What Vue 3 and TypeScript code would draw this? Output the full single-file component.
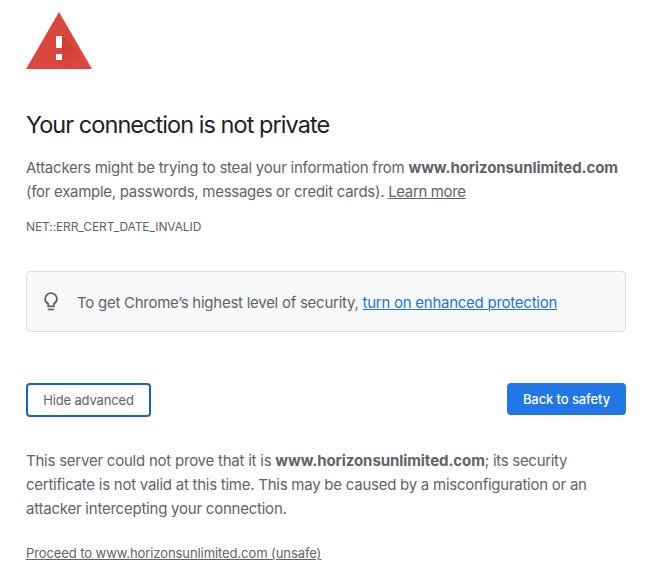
<script setup lang="ts">
const host: string = 'www.horizonsunlimited.com'
</script>

<template>
  <main class="page">
    <svg class="warning" width="66" height="57" viewBox="0 0 66 57" aria-hidden="true">
      <defs>
        <linearGradient id="shade" x1="33" y1="27" x2="52" y2="48" gradientUnits="userSpaceOnUse">
          <stop offset="0" stop-color="#b93c31" />
          <stop offset="1" stop-color="#db473c" />
        </linearGradient>
      </defs>
      <path d="M33 0 66 57H0Z" fill="#db473c" />
      <path d="M36 24 53 41 62 57H39L30 48V42H36V36H30Z" fill="url(#shade)" opacity=".7" />
      <path d="M30 24h6v12h-6zM30 42h6v6h-6z" fill="#fff" />
    </svg>

    <h1 class="title">Your connection is not private</h1>
    <p class="text intro">
      <span class="l1">Attackers might be trying to steal your information from <b>{{ host }}</b></span><br />
      <span class="l2">(for example, passwords, messages or credit cards). <a class="more">Learn more</a></span>
    </p>
    <div class="code">NET::ERR_CERT_DATE_INVALID</div>

    <section class="tip">
      <svg class="bulb" width="14" height="20" viewBox="0 0 14 20" aria-hidden="true">
        <path d="M4.2 14.3V11.9C2.2 10.8 1.1 9.1 1.1 7a5.9 5.9 0 0 1 11.8 0c0 2.1-1.1 3.8-3.1 4.9v2.4Z" fill="none" stroke="#5f6368" stroke-width="1.8" />
        <path d="M4 17h6v1H4z" fill="#5f6368" stroke="#5f6368" stroke-width=".6" />
      </svg>
      <p class="tip-text"><span>To get Chrome’s highest level of security, </span><a class="enhanced">turn on enhanced protection</a></p>
    </section>

    <div class="actions">
      <button class="btn secondary">Hide advanced</button>
      <button class="btn primary">Back to safety</button>
    </div>

    <p class="text details">
      <span class="d1">This server could not prove that it is <b>{{ host }}</b><span class="tail">; its security</span></span><br />
      <span class="d2">certificate is not valid at this time. This may be caused by a misconfiguration or an</span><br />
      <span class="d3">attacker intercepting your connection.</span>
    </p>
    <a class="proceed">Proceed to {{ host }} (unsafe)</a>
  </main>
</template>

<style>
body {
  background: #fff;
}
</style>

<style scoped>
.page {
  box-sizing: border-box;
  width: 626px;
  height: 573px;
  padding: 12px 0 0 26px;
  overflow: hidden;
  display: flex;
  flex-direction: column;
  align-items: stretch;
  font-family: Inter, "Liberation Sans", sans-serif;
  color: #5f6368;
}
.warning {
  display: block;
  flex: none;
}
.title {
  margin: 41px 0 0;
  font-size: 23.5px;
  line-height: 30px;
  font-weight: 400;
  letter-spacing: -0.95px;
  color: #202124;
  white-space: nowrap;
}
.text {
  margin: 0;
  font-size: 15px;
  line-height: 24px;
  letter-spacing: -0.23px;
  white-space: nowrap;
}
.intro {
  margin-top: 16px;
}
.l1 {
  letter-spacing: -0.235px;
}
.l2 {
  letter-spacing: -0.28px;
}
.more {
  letter-spacing: -0.35px;
}
b {
  font-weight: 700;
  letter-spacing: -0.07px;
}
a {
  text-decoration: underline;
  text-decoration-thickness: 1px;
  text-underline-offset: 1px;
  cursor: pointer;
}
.code {
  margin-top: 14px;
  font-size: 12px;
  line-height: 18px;
  letter-spacing: -0.1px;
}
.tip {
  box-sizing: border-box;
  height: 61px;
  margin-top: 35px;
  padding: 1px 17px 0;
  display: flex;
  align-items: center;
  border: 1px solid #dadce0;
  border-radius: 4px;
  background: #f8f9fb;
}
.bulb {
  flex: none;
  margin-right: 19px;
}
.tip-text {
  margin: 0;
  padding-top: 2px;
  font-size: 15px;
  line-height: 24px;
  letter-spacing: -0.255px;
  white-space: pre;
}
.enhanced {
  color: #1a73e8;
}
.actions {
  margin-top: 51px;
  display: flex;
  justify-content: space-between;
  align-items: flex-start;
}
.btn {
  box-sizing: border-box;
  padding: 0;
  font-family: inherit;
  font-size: 13px;
  border-radius: 4px;
  white-space: nowrap;
}
.secondary {
  width: 125px;
  height: 34px;
  border: 2px solid #1062cc;
  background: #fff;
  color: #5f6368;
  letter-spacing: -0.15px;
}
.primary {
  width: 119px;
  height: 32px;
  border: 0;
  background: #2176e8;
  color: #fff;
  font-weight: 500;
  letter-spacing: -0.1px;
}
.details {
  margin-top: 32px;
}
.tail {
  letter-spacing: -0.3px;
}
.d2 {
  letter-spacing: -0.25px;
}
.proceed {
  align-self: flex-start;
  margin-top: 22px;
  font-size: 13px;
  line-height: 20px;
  letter-spacing: -0.085px;
  white-space: nowrap;
}
</style>
